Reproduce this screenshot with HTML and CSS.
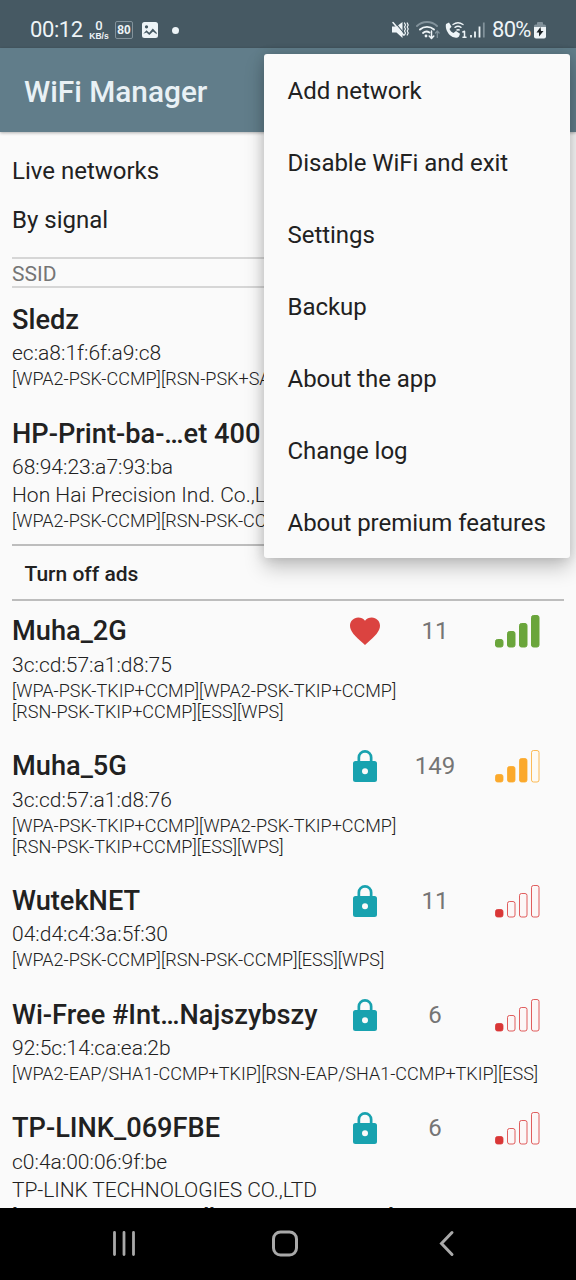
FILE: index.html
```
<!DOCTYPE html>
<html lang="en">
<head>
<meta charset="utf-8">
<title>WiFi Manager</title>
<link rel="stylesheet" href="styles.css">
</head>
<body>
<svg class="defs" width="0" height="0">
  <symbol id="lock" viewBox="0 0 36 36"><path fill="#18a2af" fill-rule="evenodd" d="M27.500 13h-2V9.500a7.500 7.500 0 0 0-15 0V13h-2A2.500 2.500 0 0 0 6 15.500v16A2.500 2.500 0 0 0 8.500 34h19a2.500 2.500 0 0 0 2.500-2.500v-16a2.500 2.500 0 0 0-2.500-2.500zM18 26.200a3 3 0 1 1 0-6 3 3 0 0 1 0 6zM22.800 13h-9.600V9.500a4.800 4.800 0 0 1 9.600 0z"/></symbol>
  <symbol id="heart" viewBox="0 0 24 24"><path fill="#db4340" d="M12 21.350l-1.450-1.320C5.400 15.360 2 12.280 2 8.500 2 5.420 4.420 3 7.500 3c1.740 0 3.410.81 4.500 2.090C13.090 3.810 14.760 3 16.500 3 19.580 3 22 5.420 22 8.500c0 3.780-3.400 6.860-8.550 11.540z"/></symbol>
  <symbol id="bars" viewBox="0 0 46 34">
    <rect x="1.500" y="25.500" width="7.500" height="7.500" rx="2"/>
    <rect style="fill:var(--f2)" x="13.500" y="17.500" width="7.500" height="15.500" rx="2"/>
    <rect style="fill:var(--f3)" x="25.500" y="9.500" width="7.500" height="23.500" rx="2"/>
    <rect style="fill:var(--f4)" x="37.500" y="1.500" width="7.500" height="31.500" rx="2"/>
  </symbol>
</svg>
<div class="screen">
  <header class="status">
    <span class="clock">00:12</span>
    <span class="speed"><b>0</b><i>KB/s</i></span>
    <span class="badge80">80</span>
    <svg class="pic" width="16" height="17" viewBox="0 0 16 17"><path fill="#eef4f7" fill-rule="evenodd" d="M2.500 0h11A2.500 2.500 0 0 1 16 2.500v11a2.500 2.500 0 0 1-2.500 2.500h-11A2.500 2.500 0 0 1 0 13.500v-11A2.500 2.500 0 0 1 2.500 0zM4.500 3.300a1.600 1.600 0 1 0 .01 0zM1.300 11.800L4.500 8.200l2.700 2.600 3.600-4.300 3.900 4.300v1.500l-3.700-2.800-3.700 3.500-2.800-2.600z"/></svg>
    <span class="dot"></span>
    <svg class="sys" width="96" height="24" viewBox="0 0 96 24" fill="none" stroke="#eef4f7" stroke-width="1.500" stroke-linecap="round" stroke-linejoin="round">
      <path fill="#eef4f7" stroke="none" d="M0 8.500h4.500L10.500 4v16l-6-5.500H0z"/>
      <path stroke="#465963" stroke-width="1.100" d="M2.500 3.800l10.500 12.700"/>
      <path d="M1 4.500l10.500 12.500"/>
      <path stroke-width="1.200" d="M12.500 5l1 2-1 2 1 2-1 2 1 2-1 2M15.200 5l1 2-1 2 1 2-1 2 1 2-1 2"/>
      <path stroke="#82929b" stroke-width="2" d="M25 8a14.500 14.500 0 0 1 20 0"/>
      <path stroke-width="1.900" d="M28 11.500a10.500 10.500 0 0 1 14 0M31 15a5.500 5.500 0 0 1 6.500-.5"/>
      <circle cx="34" cy="18" r="1.400" fill="#eef4f7" stroke="none"/>
      <path d="M39.500 13v7M37.200 18l2.300 2.500 2.300-2.500"/>
      <path stroke="#82929b" stroke-width="1.200" d="M45.300 19.500v-6M43.500 15l1.800-2 1.800 2"/>
      <path fill="#eef4f7" stroke="none" d="M54 6l3-1.500 2.500 4.200-2 2.300c.8 2 2 3.200 4 4l2.500-2 4 2.700-1 2.800c-1.500 1.700-4.500 1.700-7.500-.2-4-2.500-6.500-8.300-5.500-12.300z"/>
      <path stroke-width="1.400" d="M61 6.500a9 9 0 0 1 10 0M63 9.300a5.500 5.500 0 0 1 6 0M65 12a2.500 2.500 0 0 1 2.200 0"/>
      <path stroke-width="1.500" d="M70.800 14l1.700-.8v6M71 19.300h3"/>
      <path stroke-width="1.800" stroke-linecap="butt" d="M79 19.500v-2.500M83 19.500v-6M87.500 19.500V8.500"/>
      <path stroke="#82929b" stroke-width="1.800" stroke-linecap="butt" d="M91.800 19.500V4.500"/>
    </svg>
    <span class="pct">80%</span>
    <svg class="batt" width="12" height="17" viewBox="0 0 12 17"><path fill="#82929b" d="M0 6V4q0-1.500 1.500-1.500H3V1q0-1 1-1h4q1 0 1 1v1.500h1.500Q12 2.500 12 4v2z"/><path fill="#eef4f7" d="M0 5h12v9.500q0 2-2 2H2q-2 0-2-2z"/><path fill="#1c2327" d="M6.500 5L2.500 10.500h2.500L5 14.500 9.500 9H7z"/></svg>
  </header>
  <div class="appbar">WiFi Manager</div>
  <main class="content">
    <div class="pick">Live networks</div>
    <div class="pick second">By signal</div>
    <div class="cols">SSID</div>
    <section class="net first">
      <h2>Sledz</h2><p class="mac">ec:a8:1f:6f:a9:c8</p>
      <p class="caps">[WPA2-PSK-CCMP][RSN-PSK+SA</p>
    </section>
    <section class="net">
      <h2>HP-Print-ba-…et 400</h2><p class="mac">68:94:23:a7:93:ba</p><p class="mac vendor">Hon Hai Precision Ind. Co.,L</p>
      <p class="caps">[WPA2-PSK-CCMP][RSN-PSK-CC</p>
    </section>
    <div class="ads">Turn off ads</div>
    <section class="net">
      <svg class="mark"><use href="#heart"/></svg><span class="chan">11</span><svg class="bars s4"><use href="#bars"/></svg>
      <h2>Muha_2G</h2><p class="mac">3c:cd:57:a1:d8:75</p>
      <p class="caps">[WPA-PSK-TKIP+CCMP][WPA2-PSK-TKIP+CCMP]<br>[RSN-PSK-TKIP+CCMP][ESS][WPS]</p>
    </section>
    <section class="net">
      <svg class="mark"><use href="#lock"/></svg><span class="chan">149</span><svg class="bars s3"><use href="#bars"/></svg>
      <h2>Muha_5G</h2><p class="mac">3c:cd:57:a1:d8:76</p>
      <p class="caps">[WPA-PSK-TKIP+CCMP][WPA2-PSK-TKIP+CCMP]<br>[RSN-PSK-TKIP+CCMP][ESS][WPS]</p>
    </section>
    <section class="net">
      <svg class="mark"><use href="#lock"/></svg><span class="chan">11</span><svg class="bars s1"><use href="#bars"/></svg>
      <h2>WutekNET</h2><p class="mac">04:d4:c4:3a:5f:30</p>
      <p class="caps">[WPA2-PSK-CCMP][RSN-PSK-CCMP][ESS][WPS]</p>
    </section>
    <section class="net">
      <svg class="mark"><use href="#lock"/></svg><span class="chan">6</span><svg class="bars s1"><use href="#bars"/></svg>
      <h2>Wi-Free #Int…Najszybszy</h2><p class="mac">92:5c:14:ca:ea:2b</p>
      <p class="caps">[WPA2-EAP/SHA1-CCMP+TKIP][RSN-EAP/SHA1-CCMP+TKIP][ESS]</p>
    </section>
    <section class="net">
      <svg class="mark"><use href="#lock"/></svg><span class="chan">6</span><svg class="bars s1"><use href="#bars"/></svg>
      <h2>TP-LINK_069FBE</h2><p class="mac">c0:4a:00:06:9f:be</p><p class="mac vendor tight">TP-LINK TECHNOLOGIES CO.,LTD</p>
      <p class="caps">[WPA2-PSK-TKIP+CCMP][RSN-PSK-TKIP+CCMP]</p>
    </section>
  </main>
  <nav class="navbar">
    <svg width="24" height="28" viewBox="0 0 24 28" stroke="#a9a9a9" stroke-width="2.800" stroke-linecap="round"><path d="M2.500 2.500v22M12 2.500v22M21.500 2.500v22"/></svg>
    <svg class="home" width="28" height="28" viewBox="0 0 28 28" fill="none" stroke="#a9a9a9" stroke-width="3"><rect x="2.500" y="2" width="23" height="23" rx="7"/></svg>
    <svg width="16" height="28" viewBox="0 0 16 28" fill="none" stroke="#a9a9a9" stroke-width="3" stroke-linecap="round"><path d="M13 2.500L2.500 13.500l10.500 11"/></svg>
  </nav>
  <div class="menu">
    <div>Add network</div><div>Disable WiFi and exit</div><div>Settings</div><div>Backup</div><div>About the app</div><div>Change log</div><div>About premium features</div>
  </div>
</div>
</body>
</html>
```
FILE: styles.css
```
* { box-sizing: border-box; }
body { margin: 0; background: #fafafa; font-family: Roboto, sans-serif; color: #212121; }
.defs { display: none; }
.screen { position: relative; width: 576px; height: 1280px; display: flex; flex-direction: column; overflow: hidden; }
.status { height: 48px; flex: none; background: #465963; color: #eef4f7; display: flex; align-items: center; padding: 12px 30px 0; }
.clock { font-size: 22px; line-height: 36px; width: 59px; letter-spacing: -.4px; }
.speed { width: 20px; display: flex; flex-direction: column; align-items: center; line-height: 1; }
.speed b { font-size: 13px; line-height: 13px; font-weight: 500; }
.speed i { font: bold 8.500px/9px "Liberation Sans", sans-serif; }
.badge80 { margin-left: 6px; width: 18px; height: 18px; border: 1px solid #82929b; border-radius: 2px; font: bold 12px/17px "Liberation Sans", sans-serif; text-align: center; }
.pic { margin-left: 9px; }
.dot { width: 7px; height: 7px; border-radius: 50%; background: #eef4f7; margin-left: 14px; }
.sys { margin-left: auto; }
.pct { font-size: 22px; line-height: 36px; letter-spacing: -.7px; width: 41px; margin-left: 4px; white-space: nowrap; }
.batt { margin: 0 0 0 1px; }
.appbar { height: 84px; flex: none; background: #617d8a; color: #e9f1f5; font-size: 29.800px; font-weight: 500; line-height: 87px; padding-left: 24px; box-shadow: 0 1px 3px rgba(0,0,0,.3); position: relative; }
.content { flex: 1; min-height: 0; overflow: hidden; padding: 15px 12px 0; }
.pick { font-size: 24px; line-height: 49px; }
.cols { margin-top: 12px; height: 31px; border-top: 2px solid #d6d6d6; border-bottom: 2px solid #d6d6d6; font-size: 21px; line-height: 30px; color: #757575; }
.net { padding-bottom: 25.700px; display: grid; grid-template-columns: 330px 46px 94px 1fr; align-items: center; }
.net.first { margin-top: 14px; }
.net h2 { grid-area: 1 / 1; margin: 0; font-size: 27.200px; font-weight: 500; line-height: 36px; white-space: nowrap; }
.mac { grid-column: 1 / -1; margin: 1.300px 0 0; font-size: 21px; line-height: 28px; font-weight: 300; }
.vendor { margin: 0; }
.tight { letter-spacing: -.1px; }
.caps { grid-column: 1 / -1; margin: 1px 0 0; font-size: 18.030px; line-height: 21.300px; font-weight: 300; white-space: nowrap; padding-bottom: .3px; }
.mark { grid-area: 1 / 2; width: 36px; height: 36px; margin: -1px 5px; }
.chan { grid-area: 1 / 3; text-align: center; font-size: 24px; line-height: 36px; color: #757575; }
.bars { grid-area: 1 / 4; width: 46px; height: 34px; margin-left: 12px; }
.s4 { fill: #6aa53b; stroke: #6aa53b; }
.s3 { fill: #fba92c; stroke: #fba92c; --f4: #fdfaf4; }
.s1 { fill: #d93636; stroke: #d93636; --f2: #fcf7f7; --f3: #fcf7f7; --f4: #fcf7f7; }
.s3, .s1 { stroke-width: .8px; }
.ads { height: 57px; margin: -13.600px 0 12.800px; border-top: 2px solid #bdbdbd; border-bottom: 2px solid #bdbdbd; padding-left: 12.500px; font-size: 21px; font-weight: 500; line-height: 56px; }
.navbar { height: 72px; flex: none; background: #000; display: flex; align-items: center; justify-content: space-between; padding: 0 121px 0 112px; }
.home { margin-right: 5px; }
.menu { position: absolute; left: 263.500px; top: 54px; width: 306.500px; height: 504px; background: #fafafa; border-radius: 3px; box-shadow: 0 10px 20px rgba(0,0,0,.22), 0 0 12px rgba(0,0,0,.14); font-size: 24px; letter-spacing: -.03px; }
.menu div { height: 72px; line-height: 74px; padding-left: 24px; white-space: nowrap; }
```
